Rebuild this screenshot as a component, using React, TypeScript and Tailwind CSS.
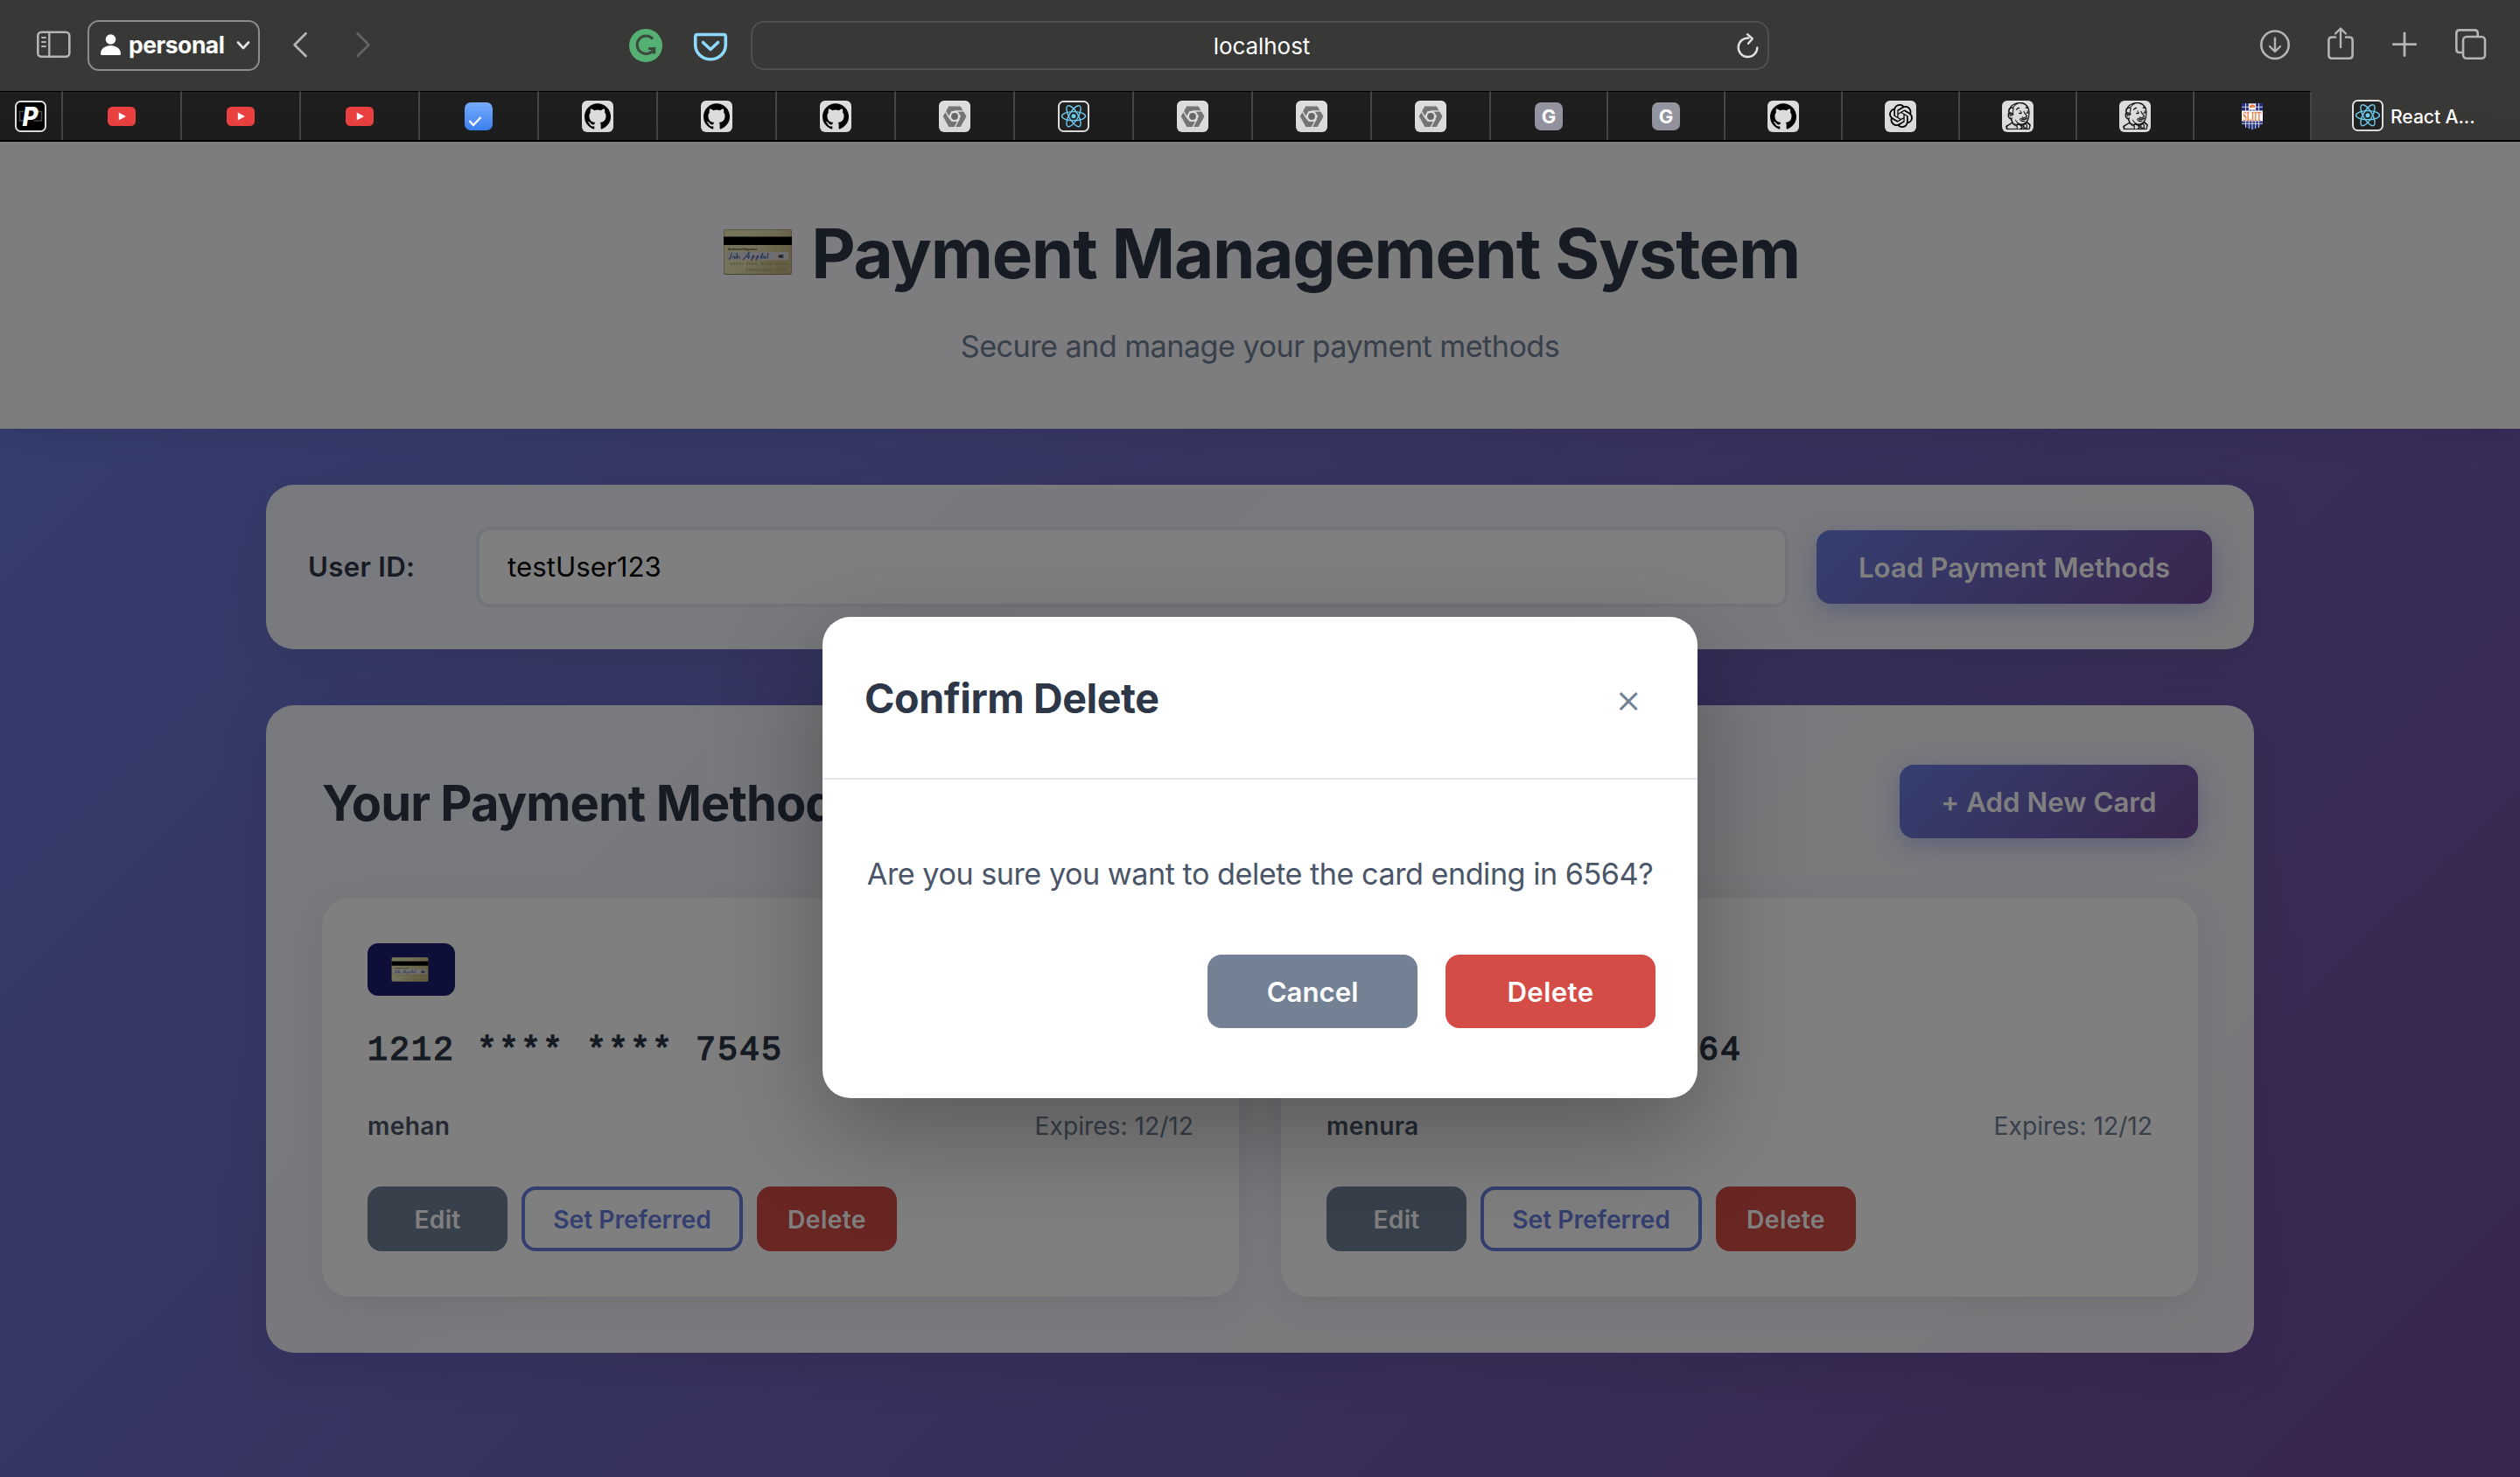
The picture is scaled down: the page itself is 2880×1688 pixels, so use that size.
import React, { useId } from "react";
import { SiGithub, SiJenkins, SiOpenai } from "react-icons/si";

/* ---------- browser toolbar ---------- */

function Glyph({ x, w, className, children }: { x: number; w: number; className?: string; children: React.ReactNode }) {
  return (
    <svg
      width={w}
      height={48}
      viewBox={`${x} 28 ${w} 48`}
      fill="none"
      stroke="currentColor"
      strokeLinecap="round"
      strokeLinejoin="round"
      className={`shrink-0 overflow-visible ${className ?? ""}`}
    >
      {children}
    </svg>
  );
}

function Toolbar() {
  return (
    <div className="flex h-[104px] items-center bg-[#383836] text-[#b4b4b3]">
      <Glyph x={42} w={39} className="ml-[42px]">
        <rect x="43.3" y="36.8" width="36" height="28" rx="4" strokeWidth="2.6" />
        <path d="M56.3 37v28" strokeWidth="2.4" />
        <path d="M48 43h4M48 48h4M48 53h4" strokeWidth="1.8" />
      </Glyph>
      <div className="ml-[19px] flex h-[58px] w-[197px] shrink-0 items-center rounded-[13px] border-2 border-[#8c8c8b] text-white">
        <svg width="23" height="24" viewBox="0 0 23 24" fill="currentColor" className="ml-[13px] -mt-0.5">
          <circle cx="11.5" cy="6" r="5.8" />
          <path d="M0 22.5C0 16.5 5.5 13 11.5 13S23 16.5 23 22.5Q23 24 21.5 24H1.5Q0 24 0 22.5Z" />
        </svg>
        <span className="-mt-0.5 ml-[9px] w-[123px] text-[26.5px] font-bold leading-8 tracking-[-0.5px]">personal</span>
        <svg width="16" height="10" viewBox="0 0 16 10" fill="none" stroke="#e4e4e4" strokeWidth="2.6" strokeLinecap="round" strokeLinejoin="round">
          <path d="M2 1.5 8 8 14 1.5" />
        </svg>
      </div>
      <Glyph x={335} w={16} className="ml-[38px]">
        <path d="M349.5 38.3 336.6 51.2 349.5 64.1" strokeWidth="2.8" />
      </Glyph>
      <Glyph x={407} w={16} className="ml-14 text-[#636362]">
        <path d="M408.6 38.3 421.5 51.2 408.6 64.1" strokeWidth="2.8" />
      </Glyph>
      <Glyph x={719} w={38} className="ml-[296px]">
        <circle cx="738" cy="52" r="19" fill="#55b173" stroke="none" />
        <path d="M746 44.5A10.2 10.2 0 1 0 747.6 55.5L741 55.5M747.7 54.8V61.5" stroke="#3c4a3f" strokeWidth="3" strokeLinecap="butt" strokeLinejoin="miter" />
      </Glyph>
      <Glyph x={793} w={38} className="ml-9 text-[#8fd8ff]">
        <path d="M797 39.5H827Q829.3 39.5 829.3 42V51.5A17.3 16.3 0 0 1 794.7 51.5V42Q794.7 39.5 797 39.5Z" strokeWidth="3.6" />
        <path d="M803.5 48.5 812 56.5 820.5 48.5" strokeWidth="3.6" />
      </Glyph>
      <div className="ml-[27px] flex h-14 w-[1164px] shrink-0 items-center rounded-[15px] border-2 border-[#50504f] text-white">
        <span className="w-[1126px] pl-[38px] pt-0.5 text-center text-[26px] leading-8 tracking-[-0.07px]">localhost</span>
        <Glyph x={1985} w={26} className="-ml-px text-[#e2e2e2]">
          <path d="M1998.5 43.5A10.8 10.8 0 1 0 2008.3 54.5" strokeWidth="2.4" />
          <path d="M1997 39.2 2002.8 44.2 1998 49.8" strokeWidth="2.4" />
        </Glyph>
      </div>
      <Glyph x={2583} w={34} className="ml-[561px]">
        <circle cx="2600" cy="51.2" r="15.7" strokeWidth="2.6" />
        <path d="M2600 43.5V58.5M2594 53 2600 59 2606 53" strokeWidth="2.4" />
      </Glyph>
      <Glyph x={2660} w={30} className="ml-[43px]">
        <path d="M2669 42.5H2665Q2661.4 42.5 2661.4 46V63Q2661.4 66.7 2665 66.7H2685Q2688.6 66.7 2688.6 63V46Q2688.6 42.5 2685 42.5H2681" strokeWidth="2.6" />
        <path d="M2675 33V54M2669 38.5 2675 32.5 2681 38.5" strokeWidth="2.4" />
      </Glyph>
      <Glyph x={2734} w={28} className="ml-11">
        <path d="M2748 38V63.5M2735.3 50.7H2760.7" strokeWidth="2.8" />
      </Glyph>
      <Glyph x={2806} w={36} className="ml-11">
        <path d="M2814.5 60H2811Q2807.3 60 2807.3 56.4V38Q2807.3 34.4 2811 34.4H2828Q2831.7 34.4 2831.7 38V41.5" strokeWidth="2.6" />
        <rect x="2815" y="42" width="25" height="24.7" rx="4" strokeWidth="2.6" />
      </Glyph>
    </div>
  );
}

/* ---------- favicons ---------- */

function Tile({ children }: { children: React.ReactNode }) {
  return <div className="flex size-9 items-center justify-center rounded-[6px] bg-[#dddddd] text-black">{children}</div>;
}

const YouTube = () => (
  <svg width="32" height="22" viewBox="0 0 32 22">
    <rect width="32" height="22" rx="5.5" fill="#ea4040" />
    <path d="M12.8 6.6 21 11 12.8 15.4Z" fill="#fff" />
  </svg>
);

const Check = () => (
  <div className="flex size-8 rounded-[7px] bg-linear-to-b from-[#77aaf8] to-[#3b82f4]">
    <svg width="32" height="32" viewBox="0 0 32 32" fill="none" stroke="#fff" strokeWidth="2.4">
      <path d="M5.5 21 10 26 18.5 17" />
    </svg>
  </div>
);

const GitHub = () => (
  <Tile>
    <SiGithub size={30} />
  </Tile>
);

const HexMark = () => (
  <Tile>
    <svg width="36" height="36" viewBox="0 0 36 36">
      <path
        fillRule="evenodd"
        fill="#757575"
        d="M11.3 6.5H24.7L31.5 18 24.7 29.9H11.3L4.7 18ZM14.5 12 11 18 14.5 24.1H21.5L25 18 21.5 12Z"
      />
      <circle cx="18" cy="18" r="3.9" fill="#686868" />
      <g stroke="#dddddd" strokeWidth="1.4">
        <path d="M7.2 11.8 13 21.5" />
        <path d="M7.2 11.8 13 21.5" transform="rotate(120 18 18.1)" />
        <path d="M7.2 11.8 13 21.5" transform="rotate(240 18 18.1)" />
      </g>
    </svg>
  </Tile>
);

const ReactMark = () => (
  <svg width="36" height="36" viewBox="0 0 36 36" fill="none">
    <rect x="1" y="1" width="34" height="34" rx="5.5" fill="#222222" stroke="#dedede" strokeWidth="2" />
    <g stroke="#6fcdee" strokeWidth="1.4">
      <ellipse cx="18" cy="17.7" rx="13.5" ry="5.1" />
      <ellipse cx="18" cy="17.7" rx="13.5" ry="5.1" transform="rotate(60 18 17.7)" />
      <ellipse cx="18" cy="17.7" rx="13.5" ry="5.1" transform="rotate(120 18 17.7)" />
    </g>
    <circle cx="18" cy="17.7" r="2.5" fill="#6fcdee" />
  </svg>
);

const Letter = () => (
  <div className="flex size-8 items-center justify-center rounded-[7px] bg-[#9494a1] text-[22px] font-bold leading-none text-white">G</div>
);

const OpenAI = () => (
  <Tile>
    <SiOpenai size={27} />
  </Tile>
);

const Jenkins = () => (
  <Tile>
    <SiJenkins size={31} stroke="currentColor" strokeWidth={0.3} />
  </Tile>
);

const Shield = () => (
  <svg width="24" height="30" viewBox="0 0 24 30" className="overflow-visible">
    <path d="M0 0H24V22Q23 26.500 12 30 1 26.500 0 22Z" fill="#23317f" />
    <path d="M4.500 0V28M8.300 0V29M12 0V30M15.700 0V29M19.500 0V28M0 4.300H24M0 23.200H24" stroke="#e9e9f2" strokeWidth="0.900" />
    <rect x="8.300" y="0.500" width="7.400" height="7" fill="#fff" />
    <path d="M9 2.500 12 1.300 15 2.500V5.500L13 4.500 9.500 5.800Z" fill="#ec7a3b" />
    <rect y="8.500" width="24" height="12" fill="#fff" />
    <text x="1.200" y="19.700" fontFamily="Liberation Serif" fontWeight="700" fontSize="15.500" textLength="21.500" lengthAdjust="spacingAndGlyphs" fill="#ec7a3b">
      SLIIT
    </text>
  </svg>
);

const PTile = () => (
  <svg width="36" height="36" viewBox="0 0 36 36">
    <rect x="1" y="1" width="34" height="34" rx="5.5" fill="#000" stroke="#dedede" strokeWidth="2" />
    <path d="M10 12.5H5.5V23H10M26 12.5H30.5V23H22" fill="none" stroke="#4a4a4a" strokeWidth="1.6" />
    <text x="17.5" y="29" textAnchor="middle" fontFamily="Inter" fontStyle="italic" fontWeight="800" fontSize="30" textLength="18" lengthAdjust="spacingAndGlyphs" fill="#fff">
      P
    </text>
  </svg>
);

const WIDE_TABS = [YouTube, YouTube, YouTube, Check, GitHub, GitHub, GitHub, HexMark, ReactMark, HexMark, HexMark, HexMark];
const NARROW_TABS = [Letter, Letter, GitHub, OpenAI, Jenkins, Jenkins, Shield];

function TabBar() {
  return (
    <div className="flex h-[58px] border-b-2 border-black bg-[#383836]">
      <div className="flex w-[72px] shrink-0 items-center justify-center border-r-2 border-t border-r-[#464646] border-t-black bg-[#1e1e1e]">
        <PTile />
      </div>
      {WIDE_TABS.map((Icon, i) => (
        <div key={i} className="flex w-[136px] shrink-0 items-center justify-center border-r-2 border-t border-r-[#464646] border-t-black bg-[#1e1e1e]">
          <Icon />
        </div>
      ))}
      {NARROW_TABS.map((Icon, i) => (
        <div key={i} className="flex w-[134px] shrink-0 items-center justify-center border-r-2 border-t border-r-[#464646] border-t-black bg-[#1e1e1e]">
          <Icon />
        </div>
      ))}
      <div className="flex grow items-center pl-[46px] text-[21.2px] font-medium tracking-[-0.1px] text-white">
        <ReactMark />
        <span className="ml-2 whitespace-nowrap pt-0.5 leading-7">React A...</span>
      </div>
    </div>
  );
}

/* ---------- page ---------- */

function CardEmoji({ className }: { className?: string }) {
  const id = useId();
  return (
    <svg viewBox="0 0 78 52" className={className}>
      <defs>
        <linearGradient id={id} x1="0" x2="1" y1="0" y2="0.4">
          <stop offset="0" stopColor="#efe9b6" />
          <stop offset="0.45" stopColor="#eae4b8" />
          <stop offset="1" stopColor="#cbbc88" />
        </linearGradient>
      </defs>
      <rect width="78" height="52" rx="3" fill="#8d8560" />
      <rect x="0.5" y="0.5" width="77" height="50.5" rx="3" fill={`url(#${id})`} />
      <rect y="8.5" width="78" height="9.5" fill="#000" />
      <text x="5" y="24" fontFamily="Liberation Sans" fontWeight="700" fontSize="3.6" textLength="32" fill="#4a4630">
        Authorized Signature
      </text>
      <rect x="4" y="26" width="70" height="9" fill="#dcdce2" />
      <path
        d="M6 34.5C9 33 8.5 28 9.500 27M10 33C11 30 13 30 12.500 33 13.500 34 15 31 15.500 27 15 31 15 33 15.500 33.500 17 29.500 18.500 31 18.500 33.500M22 35C25 32 28 28 29 26.500 29 30 28.500 33 28.500 34M25 31.500H30M32 36C32.500 33 33 31 34 30 36 30.500 34.500 33 33 33M37 36C37.500 33 38 31 39 30 41 30.500 39.500 33 38 33M42 33.500C43 30 44 28 45 27 43.500 31 43 33 44.500 33 46 32 46 30.500 47 30.500 45.500 33 47 34 49 32M51 27C50 31 49.500 33 51 33"
        fill="none"
        stroke="#5468ae"
        strokeWidth="1.1"
      />
      <text x="62" y="32.5" fontFamily="Liberation Sans" fontWeight="700" fontSize="5.5" fill="#222">
        440
      </text>
      <path d="M8 39.5H22M26 39.5H39M43 39.5H56M60 39.5H73M26 46.5H56M60 46.5H73" stroke="#a59a68" strokeWidth="3" strokeDasharray="2 1.2" opacity="0.55" />
    </svg>
  );
}

function PrimaryButton({ className, children }: { className: string; children: React.ReactNode }) {
  return (
    <button
      className={`h-[84px] shrink-0 rounded-2xl bg-[linear-gradient(135deg,#697fe0_0%,#744c9e_100%)] pt-0.5 text-[31.2px] font-semibold tracking-[0.05px] text-white shadow-[0_8px_30px_rgba(102,126,234,0.4)] ${className}`}
    >
      {children}
    </button>
  );
}

function PaymentCard({ number, holder }: { number: string; holder: string }) {
  return (
    <div className="flex h-[456px] grow basis-0 flex-col rounded-[32px] bg-white p-[52px] shadow-[0_8px_40px_rgba(0,0,0,0.08)]">
      <div className="flex h-[60px] w-[100px] items-center justify-center rounded-xl bg-[#1a1f71]">
        <CardEmoji className="mr-1 h-7 w-[43px]" />
      </div>
      <div className="mt-[35px] whitespace-pre font-['Liberation_Mono',monospace] text-[38.4px] leading-[56px] tracking-[1.96px] text-[#2d3748] [-webkit-text-stroke:1.4px_#2d3748]">
        {number}
      </div>
      <div className="mt-9 flex justify-between text-[28.2px] leading-[44px]">
        <span className="font-semibold tracking-[0.3px] text-[#4a5568]">{holder}</span>
        <span className="text-[#718096]">Expires: 12/12</span>
      </div>
      <div className="mt-[47px] flex gap-4 text-[28.2px] font-semibold">
        <button className="h-[74px] w-40 rounded-2xl bg-[#718096] pt-0.5 tracking-[0.2px] text-white">Edit</button>
        <button className="h-[74px] w-[253px] rounded-2xl border-4 border-[#697fe0] pt-0.5 text-[#697fe0]">Set Preferred</button>
        <button className="h-[74px] w-40 rounded-2xl bg-[#d34c46] pt-0.5 tracking-[0.4px] text-white">Delete</button>
      </div>
    </div>
  );
}

function Modal() {
  return (
    <div className="flex h-[550px] w-[1000px] flex-col rounded-[32px] bg-white shadow-[0_40px_120px_rgba(0,0,0,0.3)]">
      <div className="flex h-[186px] items-center justify-between border-b-2 border-[#e2e8f0] px-12">
        <h2 className="pt-[3px] text-[46.6px] font-bold tracking-[-0.43px] text-[#2d3748]">Confirm Delete</h2>
        <button className="w-[62px] pt-0.5 text-center text-[47px] font-light leading-[60px] text-[#718096]">×</button>
      </div>
      <div className="flex grow flex-col items-center px-12 pt-20">
        <p className="whitespace-nowrap text-[34.2px] leading-[56px] tracking-[-0.49px] text-[#4a5568]">
          Are you sure you want to delete the card ending in 6564?
        </p>
        <div className="mt-16 flex gap-8 self-end text-[31.2px] font-semibold text-white">
          <button className="h-[84px] w-60 rounded-2xl bg-[#748195] pt-0.5">Cancel</button>
          <button className="h-[84px] w-60 rounded-2xl bg-[#d34c46] pt-0.5 tracking-[0.4px]">Delete</button>
        </div>
      </div>
    </div>
  );
}

export default function App() {
  return (
    <div className="flex h-[1688px] w-[2880px] flex-col overflow-hidden font-['Inter',sans-serif]">
      <Toolbar />
      <TabBar />
      <div className="relative grow bg-[linear-gradient(135deg,#697fe0_0%,#744c9e_100%)]">
        <header className="flex h-[328px] flex-col items-center bg-white/97 pt-20 shadow-[0_4px_40px_rgba(0,0,0,0.1)]">
          <h1 className="flex items-center gap-[22px] pl-1 text-[78px] font-bold leading-[96px] tracking-[-1.28px] text-[#2d3748]">
            <CardEmoji className="-mt-1 h-[52px] w-[78px]" />
            <span>Payment Management System</span>
          </h1>
          <p className="mt-[30px] text-[34.2px] leading-[56px] tracking-[-0.54px] text-[#718096]">Secure and manage your payment methods</p>
        </header>
        <main className="mx-auto flex w-[2272px] flex-col gap-16 pt-16">
          <section className="flex h-[188px] items-center gap-8 rounded-[32px] bg-white/92 px-12 shadow-[0_16px_64px_rgba(0,0,0,0.1)]">
            <label className="w-40 text-[31.2px] font-semibold tracking-[0.3px] text-[#2d3748]">User ID:</label>
            <div className="flex h-[92px] w-[1500px] items-center rounded-2xl border-4 border-[#e2e8f0] bg-white pl-8 pt-px text-[31.2px] tracking-[0.05px] text-black">
              testUser123
            </div>
            <PrimaryButton className="w-[452px]">Load Payment Methods</PrimaryButton>
          </section>
          <section className="h-[740px] rounded-[32px] bg-white/92 p-16 shadow-[0_16px_64px_rgba(0,0,0,0.1)]">
            <div className="mb-16 flex h-[92px] items-center justify-between">
              <h2 className="pt-[3px] text-[56px] font-bold tracking-[-0.95px] text-[#2d3748]">Your Payment Methods</h2>
              <PrimaryButton className="w-[341px]">+ Add New Card</PrimaryButton>
            </div>
            <div className="flex gap-12">
              <PaymentCard number="1212 **** **** 7545" holder="mehan" />
              <PaymentCard number="6564 **** **** 6564" holder="menura" />
            </div>
          </section>
        </main>
        <div className="absolute inset-0 flex items-start justify-center bg-black/50 pt-[543px]">
          <Modal />
        </div>
      </div>
    </div>
  );
}
